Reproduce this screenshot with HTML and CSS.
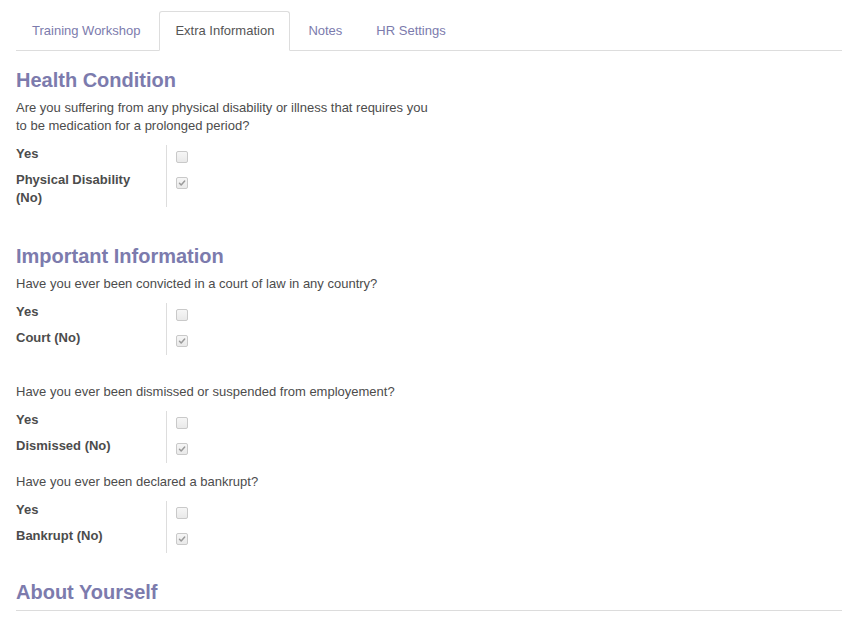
FILE: index.html
```html
<!DOCTYPE html>
<html>
<head>
<meta charset="utf-8">
<link rel="stylesheet" href="styles.css">
</head>
<body>
<div class="page">
  <ul class="tabs">
    <li class="tab"><a>Training Workshop</a></li>
    <li class="tab active"><a>Extra Information</a></li>
    <li class="tab"><a>Notes</a></li>
    <li class="tab"><a>HR Settings</a></li>
  </ul>

  <h2 class="sep first">Health Condition</h2>
  <p class="question narrow">Are you suffering from any physical disability or illness that requires you to be medication for a prolonged period?</p>
  <div class="group gap-xl">
    <div class="label">Yes</div>
    <div class="value"><span class="cb"></span></div>
    <div class="label">Physical Disability (No)</div>
    <div class="value"><span class="cb checked"><svg viewBox="0 0 12 12"><path d="M3 6.4 L5 8.4 L9.2 3.6" /></svg></span></div>
  </div>

  <h2 class="sep">Important Information</h2>
  <p class="question">Have you ever been convicted in a court of law in any country?</p>
  <div class="group gap-lg">
    <div class="label">Yes</div>
    <div class="value"><span class="cb"></span></div>
    <div class="label">Court (No)</div>
    <div class="value"><span class="cb checked"><svg viewBox="0 0 12 12"><path d="M3 6.4 L5 8.4 L9.2 3.6" /></svg></span></div>
  </div>

  <p class="question">Have you ever been dismissed or suspended from employement?</p>
  <div class="group">
    <div class="label">Yes</div>
    <div class="value"><span class="cb"></span></div>
    <div class="label">Dismissed (No)</div>
    <div class="value"><span class="cb checked"><svg viewBox="0 0 12 12"><path d="M3 6.4 L5 8.4 L9.2 3.6" /></svg></span></div>
  </div>

  <p class="question">Have you ever been declared a bankrupt?</p>
  <div class="group gap-md">
    <div class="label">Yes</div>
    <div class="value"><span class="cb"></span></div>
    <div class="label">Bankrupt (No)</div>
    <div class="value"><span class="cb checked"><svg viewBox="0 0 12 12"><path d="M3 6.4 L5 8.4 L9.2 3.6" /></svg></span></div>
  </div>

  <h2 class="sep underlined">About Yourself</h2>
</div>
</body>
</html>
```

FILE: styles.css
```css
* { box-sizing: border-box; }

html, body {
  margin: 0;
  padding: 0;
  background: #ffffff;
}

body {
  font-family: "Liberation Sans", Arial, Helvetica, sans-serif;
  font-size: 13px;
  line-height: 18px;
  color: #4c4c4c;
}

.page {
  padding: 11px 14px 0 16px;
}

.tabs {
  list-style: none;
  margin: 0;
  padding: 0;
  display: flex;
  border-bottom: 1px solid #dddddd;
}

.tab {
  margin-bottom: -1px;
  margin-right: 2px;
}

.tab:first-child {
  margin-right: 3px;
}

.tab a {
  display: block;
  padding: 10px 15px 10px 15px;
  line-height: 18px;
  border: 1px solid transparent;
  border-radius: 3px 3px 0 0;
  color: #7c7bad;
  cursor: pointer;
}

.tab.active a {
  color: #555555;
  background: #ffffff;
  border-color: #dddddd #dddddd transparent #dddddd;
}

.sep {
  margin: 0 0 7px 0;
  font-size: 20px;
  line-height: 24px;
  font-weight: bold;
  color: #7c7bad;
}

.sep.first {
  margin-top: 17px;
}

.sep.underlined {
  padding-bottom: 6px;
  border-bottom: 1px solid #dcdcdc;
}

.question {
  margin: 0 0 10px 0;
  line-height: 18px;
}

.question.narrow {
  max-width: 420px;
}

.group {
  display: grid;
  grid-template-columns: 151px auto;
  justify-content: start;
  margin-bottom: 10px;
}

.group.gap-md {
  margin-bottom: 27px;
}

.group.gap-lg {
  margin-bottom: 28px;
}

.group.gap-xl {
  margin-bottom: 37px;
}

.label {
  font-weight: bold;
  line-height: 18px;
  padding-right: 16px;
  border-right: 1px solid #dddddd;
  color: #4c4c4c;
}

.value {
  min-height: 26px;
  padding-left: 9px;
  padding-top: 6px;
}

.cb {
  display: block;
  width: 12px;
  height: 12px;
  border: 1px solid #c9c9c9;
  border-radius: 2px;
  background: linear-gradient(#f6f6f6, #e9e9e9);
}

.cb svg {
  display: block;
  width: 10px;
  height: 10px;
}

.cb svg path {
  fill: none;
  stroke: #9a9a9a;
  stroke-width: 1.8;
  stroke-linecap: round;
  stroke-linejoin: round;
}
```
